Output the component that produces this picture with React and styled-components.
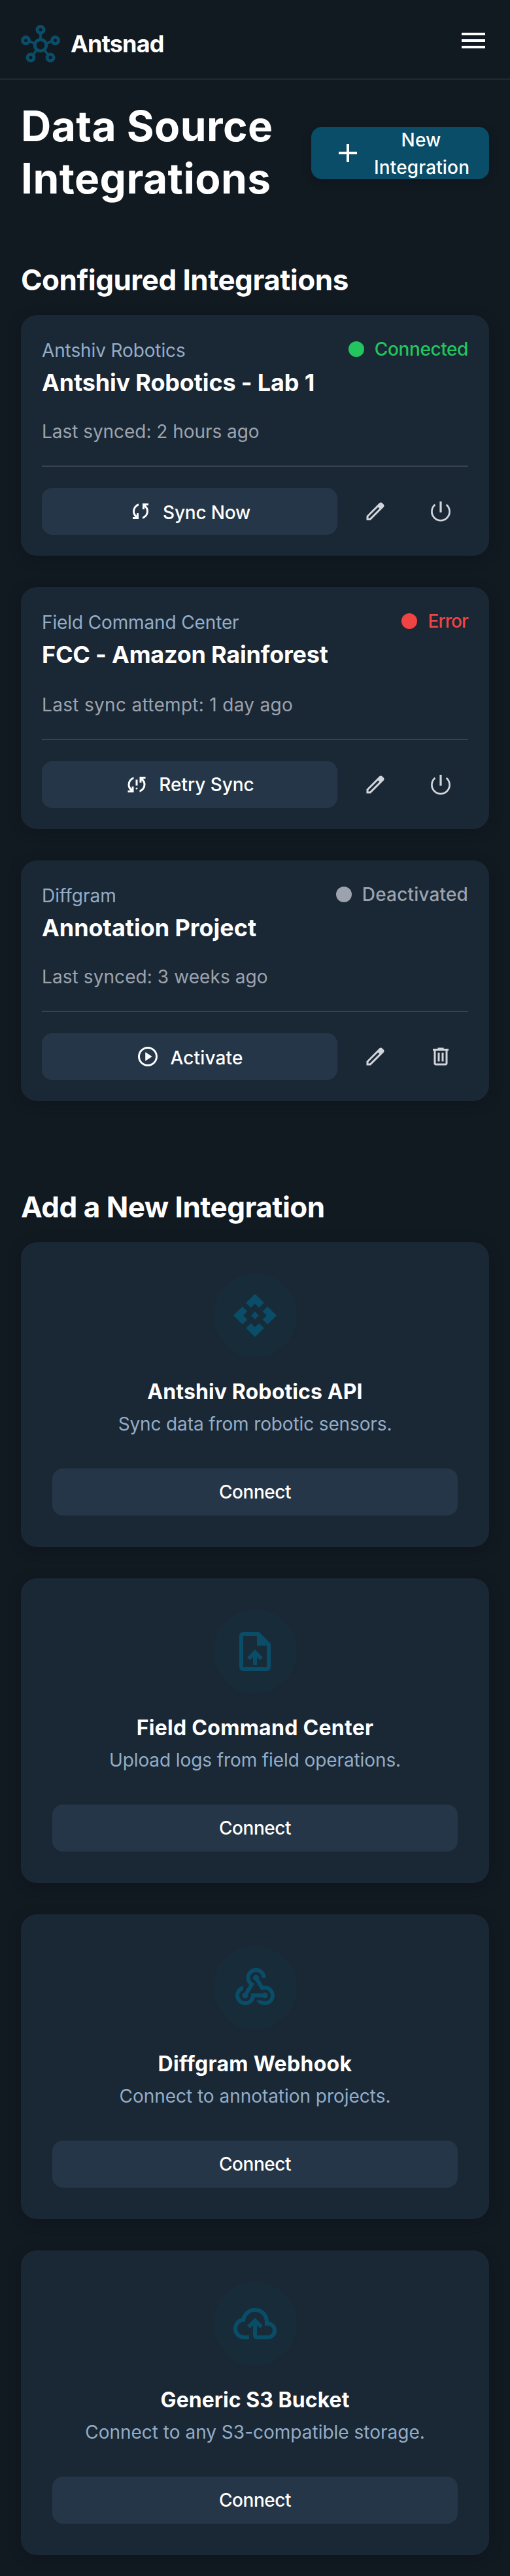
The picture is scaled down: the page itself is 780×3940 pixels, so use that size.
import React from "react";
import styled, { createGlobalStyle, ThemeProvider } from "styled-components";

const theme = {
  bg: "#111921",
  card: "#1a2734",
  button: "#243647",
  primary: "#0a4d68",
  primaryTint: "rgba(10, 77, 104, 0.1)",
  headerLine: "#1f2a37",
  divider: "#374151",
  muted: "#93adc8",
  gray: "#9ca3af",
  iconGray: "#d1d5db",
  green: "#22c55e",
  red: "#ef4444",
};

const GlobalStyle = createGlobalStyle`
  *, *::before, *::after { box-sizing: border-box; }
  body {
    margin: 0;
    background: ${theme.bg};
    color: #fff;
    font-family: Inter, "Liberation Sans", sans-serif;
  }
  h1, h2, h3, p { margin: 0; }
  button { font: inherit; color: inherit; border: 0; padding: 0; background: none; cursor: pointer; }
`;

const PATHS = {
  hub: "M240-40q-50 0-85-35t-35-85q0-50 35-85t85-35q14 0 26 3t23 8l57-71q-28-31-39-70t-5-78l-81-27q-17 25-43 40t-58 15q-50 0-85-35T0-580q0-50 35-85t85-35q50 0 85 35t35 85v8l81 28q20-36 53.5-61t75.5-32v-87q-39-11-64.5-42.5T360-840q0-50 35-85t85-35q50 0 85 35t35 85q0 42-26 73.5T510-724v87q42 7 75.5 32t53.5 61l81-28v-8q0-50 35-85t85-35q50 0 85 35t35 85q0 50-35 85t-85 35q-32 0-58.5-15T739-515l-81 27q6 39-5 77.5T614-340l57 70q11-5 23-7.5t26-2.5q50 0 85 35t35 85q0 50-35 85t-85 35q-50 0-85-35t-35-85q0-20 6.5-38.5T624-232l-57-71q-41 23-87.5 23T392-303l-56 71q11 15 17.5 33.5T360-160q0 50-35 85t-85 35ZM120-540q17 0 28.5-11.5T160-580q0-17-11.5-28.5T120-620q-17 0-28.5 11.5T80-580q0 17 11.5 28.5T120-540Zm120 420q17 0 28.5-11.5T280-160q0-17-11.5-28.5T240-200q-17 0-28.5 11.5T200-160q0 17 11.5 28.5T240-120Zm240-680q17 0 28.5-11.5T520-840q0-17-11.5-28.5T480-880q-17 0-28.5 11.5T440-840q0 17 11.5 28.5T480-800Zm0 440q42 0 71-29t29-71q0-42-29-71t-71-29q-42 0-71 29t-29 71q0 42 29 71t71 29Zm240 240q17 0 28.5-11.5T760-160q0-17-11.5-28.5T720-200q-17 0-28.5 11.5T680-160q0 17 11.5 28.5T720-120Zm120-420q17 0 28.5-11.5T880-580q0-17-11.5-28.5T840-620q-17 0-28.5 11.5T800-580q0 17 11.5 28.5T840-540Z",
  menu: "M120-240v-80h720v80H120Zm0-200v-80h720v80H120Zm0-200v-80h720v80H120Z",
  add: "M440-440H200v-80h240v-240h80v240h240v80H520v240h-80v-240Z",
  sync: "M160-160v-80h110l-16-14q-52-46-73-105t-21-119q0-111 66.5-197.5T400-790v84q-72 26-116 88.5T240-478q0 45 17 87.5t53 78.5l10 10v-98h80v240H160Zm400-10v-84q72-26 116-88.5T720-482q0-45-17-87.5T650-648l-10-10v98h-80v-240h240v80H690l16 14q49 49 71.5 106.5T800-482q0 111-66.5 197.5T560-170Z",
  syncProblem: "M120-160v-80h110l-16-14q-52-46-73-105t-21-119q0-111 66.5-197.5T360-790v84q-72 26-116 88.5T200-478q0 45 17 87.5t53 78.5l10 10v-98h80v240H120Zm360-120q-17 0-28.5-11.5T440-320q0-17 11.5-28.5T480-360q17 0 28.5 11.5T520-320q0 17-11.5 28.5T480-280Zm-40-160v-240h80v240h-80Zm160 270v-84q72-26 116-88.5T760-482q0-45-17-87.5T690-648l-10-10v98h-80v-240h240v80H730l16 14q49 49 71.5 106.5T840-482q0 111-66.5 197.5T600-170Z",
  play: "m380-300 280-180-280-180v360ZM480-80q-83 0-156-31.5T197-197q-54-54-85.5-127T80-480q0-83 31.5-156T197-763q54-54 127-85.5T480-880q83 0 156 31.5T763-763q54 54 85.5 127T880-480q0 83-31.5 156T763-197q-54 54-127 85.5T480-80Zm0-80q134 0 227-93t93-227q0-134-93-227t-227-93q-134 0-227 93t-93 227q0 134 93 227t227 93Z",
  edit: "M200-200h57l391-391-57-57-391 391v57Zm-80 80v-170l528-527q12-11 26.5-17t30.5-6q16 0 31 6t26 18l55 56q12 11 17.5 26t5.5 30q0 16-5.5 30.5T817-647L290-120H120Z",
  trash: "M280-120q-33 0-56.5-23.5T200-200v-520h-40v-80h200v-40h240v40h200v80h-40v520q0 33-23.5 56.5T680-120H280Zm400-600H280v520h400v-520ZM360-280h80v-360h-80v360Zm160 0h80v-360h-80v360Z",
  upload: "M440-200h80v-167l64 64 56-57-160-160-160 160 57 56 63-63v167ZM240-80q-33 0-56.5-23.5T160-160v-640q0-33 23.5-56.5T240-880h320l240 240v480q0 33-23.5 56.5T720-80H240Zm280-520v-200H240v640h480v-440H520Z",
  webhook: "M280-120q-83 0-141.5-58.5T80-320q0-73 45.5-127.5T240-516v83q-35 12-57.5 43T160-320q0 50 35 85t85 35q50 0 85-35t35-85v-40h235q8-9 19.5-14.5T680-380q25 0 42.5 17.5T740-320q0 25-17.5 42.5T680-260q-14 0-25.5-5.5T635-280H476q-14 69-68.5 114.5T280-120Zm400 0q-56 0-101-27.5T507-220h107q14 10 31 15t35 5q50 0 85-35t35-85q0-50-35-85t-85-35q-20 0-37 5.5T611-418L489-621q-21-4-35-20t-14-39q0-25 17.5-42.5T500-740q25 0 42.5 17.5T560-680v8.5q0 3.5-2 8.5l87 146q8-2 17-2.5t18-.5q83 0 141.5 58.5T880-320q0 83-58.5 141.5T680-120ZM280-260q-25 0-42.5-17.5T220-320q0-22 14-38t34-20l94-156q-29-27-45.5-64.5T300-680q0-83 58.5-141.5T500-880q83 0 141.5 58.5T700-680h-80q0-50-35-85t-85-35q-50 0-85 35t-35 85q0 43 26 75.5t66 41.5L337-337q2 5 2.5 8.5t.5 8.5q0 25-17.5 42.5T280-260Z",
  cloud: "M260-160q-91 0-155.5-63T40-377q0-78 47-139t123-78q25-92 100-149t170-57q117 0 198.5 81.5T760-520q69 8 114.5 59.5T920-340q0 75-52.5 127.5T740-160H520q-33 0-56.5-23.5T440-240v-206l-64 62-56-56 160-160 160 160-56 56-64-62v206h220q42 0 71-29t29-71q0-42-29-71t-71-29h-60v-80q0-83-58.5-141.5T480-720q-83 0-141.5 58.5T280-520h-20q-58 0-99 41t-41 99q0 58 41 99t99 41h100v80H260Z",
};

const Svg = styled.svg`
  display: block;
  flex: none;
  width: ${(p) => p.$size}px;
  height: ${(p) => p.$size}px;
`;

function Icon({ name, size }) {
  if (name === "power") {
    return (
      <Svg $size={size} viewBox="0 0 36 36" fill="none" stroke="currentColor">
        <path d="M18 3v16.7" strokeWidth="3.2" />
        <path d="M9.4 7.9A13.6 13.6 0 1 0 26.6 7.9" strokeWidth="2.7" />
      </Svg>
    );
  }
  if (name === "api") {
    return (
      <Svg $size={size} viewBox="0 0 24 24" fill="currentColor">
        <path d="M14 12l-2 2-2-2 2-2zM12 6l2.12 2.12 2.5-2.5L12 1 7.38 5.62l2.5 2.5zM6 12l2.12-2.12-2.5-2.5L1 12l4.62 4.62 2.5-2.5zM18 12l-2.12 2.12 2.5 2.5L23 12l-4.62-4.62-2.5 2.5zM12 18l-2.12-2.12-2.5 2.5L12 23l4.62-4.62-2.5-2.5z" />
      </Svg>
    );
  }
  return (
    <Svg $size={size} viewBox="0 -960 960 960" fill="currentColor">
      <path d={PATHS[name]} />
    </Svg>
  );
}

const Header = styled.header`
  display: flex;
  align-items: flex-start;
  justify-content: space-between;
  height: 122px;
  padding: 38px 32px 0;
  border-bottom: 2px solid ${(p) => p.theme.headerLine};
`;

const Brand = styled.div`
  display: flex;
  align-items: flex-start;
  gap: 16px;
  color: ${(p) => p.theme.primary};
`;

const BrandName = styled.span`
  color: #fff;
  font-size: 36px;
  font-weight: 700;
  line-height: 58px;
  letter-spacing: -0.82px;
`;

const MenuButton = styled.button`
  display: flex;
`;

const Main = styled.main`
  padding: 32px;
`;

const TitleRow = styled.div`
  display: flex;
  align-items: center;
  justify-content: space-between;
`;

const PageTitle = styled.h1`
  && { margin: -1px 0 1px; }
  width: 400px;
  font-size: 64px;
  font-weight: 700;
  line-height: 80px;
  letter-spacing: 0.44px;
`;

const NewButton = styled.button`
  display: flex;
  align-items: center;
  gap: 16px;
  width: 272px;
  height: 80px;
  padding: 0 32px;
  border-radius: 16px;
  background: ${(p) => p.theme.primary};
  box-shadow: 0 4px 16px rgba(0, 0, 0, 0.14);
  font-size: 28px;
  font-weight: 500;
  line-height: 42px;
  text-align: center;
`;

const NewLabel = styled.span`
  flex: 1;
  min-width: 0;
  margin: 1px 0 -1px;
  letter-spacing: 0.15px;
`;

const SectionTitle = styled.h2`
  && { margin: ${(p) => p.$top}px 0 26px; }
  font-size: 44px;
  font-weight: 700;
  line-height: 56px;
  letter-spacing: -0.51px;
`;

const CardList = styled.div`
  display: flex;
  flex-direction: column;
  gap: 48px;
`;

const cardSurface = `
  border-radius: 24px;
  background: ${theme.card};
  box-shadow: 0 4px 24px rgba(0, 0, 0, 0.14);
`;

const ConfiguredCard = styled.article`
  ${cardSurface}
  padding: 32px;
`;

const CardHead = styled.div`
  display: flex;
  align-items: flex-start;
  justify-content: space-between;
`;

const HeadText = styled.div`
  padding-top: 1px;
`;

const Provider = styled.p`
  && { margin-bottom: 6px; }
  color: ${(p) => p.theme.muted};
  font-size: 28px;
  line-height: 42px;
  letter-spacing: ${(p) => p.$track}px;
`;

const CardTitle = styled.h3`
  font-size: 36px;
  font-weight: 700;
  line-height: 45px;
  letter-spacing: ${(p) => p.$track}px;
`;

const Status = styled.div`
  display: flex;
  align-items: center;
  gap: 16px;
  color: ${(p) => p.theme[p.$tone]};
  font-size: 28px;
  font-weight: 500;
  line-height: 40px;
  letter-spacing: ${(p) => p.$track}px;
`;

const Dot = styled.span`
  width: 24px;
  height: 24px;
  border-radius: 50%;
  background: currentColor;
`;

const SyncInfo = styled.p`
  && { margin-top: ${(p) => p.$top}px; }
  color: ${(p) => p.theme.gray};
  font-size: 28px;
  line-height: 42px;
  letter-spacing: ${(p) => p.$track}px;
`;

const Actions = styled.div`
  display: flex;
  gap: 16px;
  margin-top: 31px;
  padding-top: 32px;
  border-top: 2px solid ${(p) => p.theme.divider};
`;

const SoftButton = styled.button`
  display: flex;
  align-items: center;
  justify-content: center;
  gap: 16px;
  flex: 1;
  height: 72px;
  border-radius: 16px;
  background: ${(p) => p.theme.button};
  font-size: 28px;
  font-weight: 500;
  line-height: 42px;
`;

const ButtonLabel = styled.span`
  padding-top: ${(p) => p.$drop || 0}px;
  letter-spacing: ${(p) => p.$track}px;
`;

const IconButton = styled.button`
  display: flex;
  align-items: center;
  justify-content: center;
  width: 84px;
  height: 72px;
  color: ${(p) => p.theme.iconGray};
`;

const SourceCard = styled.article`
  ${cardSurface}
  display: flex;
  flex-direction: column;
  align-items: center;
  padding: 48px;
`;

const IconCircle = styled.div`
  display: flex;
  align-items: center;
  justify-content: center;
  width: 128px;
  height: 128px;
  margin-bottom: 33px;
  border-radius: 50%;
  background: ${(p) => p.theme.primaryTint};
  color: ${(p) => p.theme.primary};
`;

const SourceTitle = styled.h3`
  font-size: 32px;
  font-weight: 700;
  line-height: 40px;
  letter-spacing: ${(p) => p.$track}px;
`;

const SourceText = styled.p`
  && { margin: 8px 0 47px; }
  color: ${(p) => p.theme.muted};
  font-size: 28px;
  line-height: 42px;
  letter-spacing: ${(p) => p.$track}px;
`;

const ConnectRow = styled.div`
  display: flex;
  align-self: stretch;
`;

const CONFIGURED = [
  {
    provider: ["Antshiv Robotics", -0.12],
    title: ["Antshiv Robotics - Lab 1", -0.16],
    tone: "green",
    status: ["Connected", -0.4],
    info: ["Last synced: 2 hours ago", -0.04],
    gap: 31,
    icon: "sync",
    action: ["Sync Now", -0.19],
    drop: 4,
    last: "power",
    lastLabel: "Deactivate",
  },
  {
    provider: ["Field Command Center", -0.13],
    title: ["FCC - Amazon Rainforest", -0.21],
    tone: "red",
    status: ["Error", -0.9],
    info: ["Last sync attempt: 1 day ago", 0.31],
    gap: 33,
    icon: "syncProblem",
    action: ["Retry Sync", -0.03],
    drop: 0,
    last: "power",
    lastLabel: "Deactivate",
  },
  {
    provider: ["Diffgram", 0],
    title: ["Annotation Project", -0.04],
    tone: "gray",
    status: ["Deactivated", 0.16],
    info: ["Last synced: 3 weeks ago", 0.08],
    gap: 31,
    icon: "play",
    action: ["Activate", 0.14],
    drop: 4,
    last: "trash",
    lastLabel: "Delete",
  },
];

const SOURCES = [
  { icon: "api", title: ["Antshiv Robotics API", 0.12], text: ["Sync data from robotic sensors.", -0.13] },
  { icon: "upload", title: ["Field Command Center", 0.28], text: ["Upload logs from field operations.", -0.1] },
  { icon: "webhook", title: ["Diffgram Webhook", 0.3], text: ["Connect to annotation projects.", -0.03] },
  { icon: "cloud", title: ["Generic S3 Bucket", 0.04], text: ["Connect to any S3-compatible storage.", 0] },
];

export default function App() {
  return (
    <ThemeProvider theme={theme}>
      <GlobalStyle />
      <Header>
        <Brand>
          <Icon name="hub" size={60} />
          <BrandName>Antsnad</BrandName>
        </Brand>
        <MenuButton aria-label="Menu">
          <Icon name="menu" size={48} />
        </MenuButton>
      </Header>
      <Main>
        <TitleRow>
          <PageTitle>Data Source Integrations</PageTitle>
          <NewButton>
            <Icon name="add" size={48} />
            <NewLabel>New Integration</NewLabel>
          </NewButton>
        </TitleRow>
        <SectionTitle $top={86}>Configured Integrations</SectionTitle>
        <CardList>
          {CONFIGURED.map((c) => (
            <ConfiguredCard key={c.title[0]}>
              <CardHead>
                <HeadText>
                  <Provider $track={c.provider[1]}>{c.provider[0]}</Provider>
                  <CardTitle $track={c.title[1]}>{c.title[0]}</CardTitle>
                </HeadText>
                <Status $tone={c.tone} $track={c.status[1]}>
                  <Dot />
                  {c.status[0]}
                </Status>
              </CardHead>
              <SyncInfo $top={c.gap} $track={c.info[1]}>
                {c.info[0]}
              </SyncInfo>
              <Actions>
                <SoftButton>
                  <Icon name={c.icon} size={36} />
                  <ButtonLabel $drop={c.drop} $track={c.action[1]}>
                    {c.action[0]}
                  </ButtonLabel>
                </SoftButton>
                <IconButton aria-label="Edit">
                  <Icon name="edit" size={36} />
                </IconButton>
                <IconButton aria-label={c.lastLabel}>
                  <Icon name={c.last} size={36} />
                </IconButton>
              </Actions>
            </ConfiguredCard>
          ))}
        </CardList>
        <SectionTitle $top={134}>Add a New Integration</SectionTitle>
        <CardList>
          {SOURCES.map((s) => (
            <SourceCard key={s.title[0]}>
              <IconCircle>
                <Icon name={s.icon} size={72} />
              </IconCircle>
              <SourceTitle $track={s.title[1]}>{s.title[0]}</SourceTitle>
              <SourceText $track={s.text[1]}>{s.text[0]}</SourceText>
              <ConnectRow>
                <SoftButton>
                  <ButtonLabel $track={-0.45}>Connect</ButtonLabel>
                </SoftButton>
              </ConnectRow>
            </SourceCard>
          ))}
        </CardList>
      </Main>
    </ThemeProvider>
  );
}
